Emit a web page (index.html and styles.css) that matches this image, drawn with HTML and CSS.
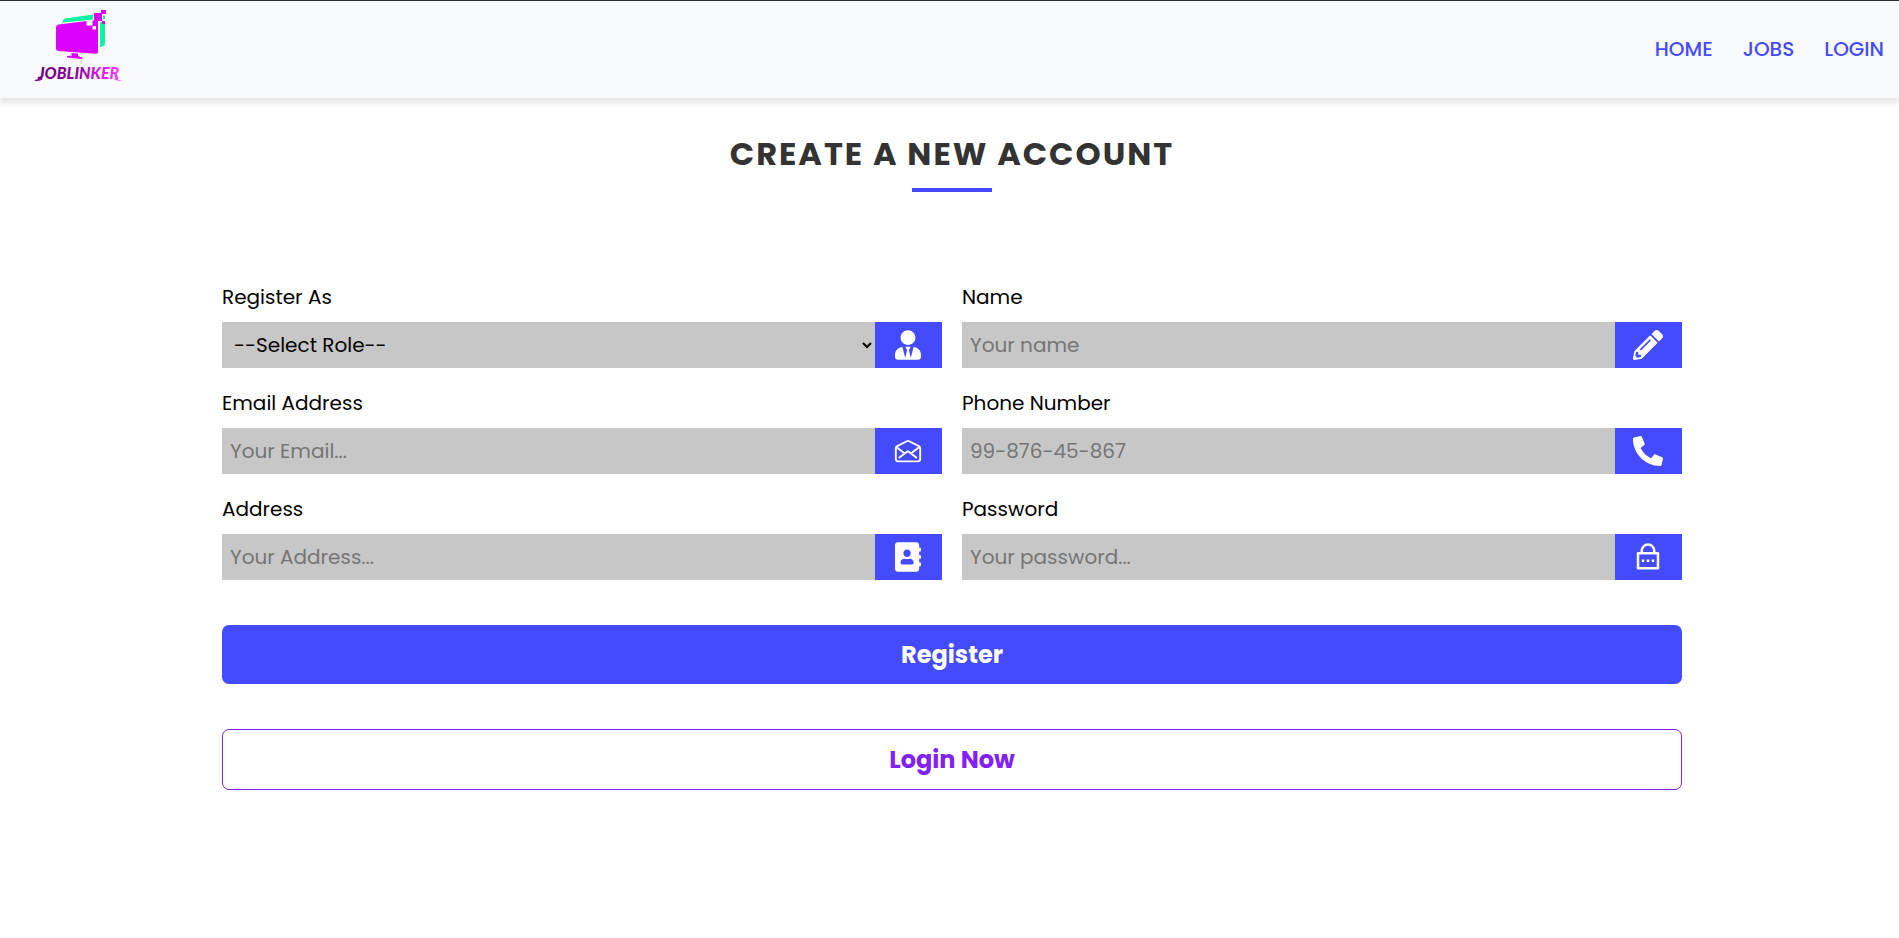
FILE: index.html
```html
<!DOCTYPE html>
<html lang="en">
<head>
<meta charset="utf-8">
<meta name="viewport" content="width=device-width, initial-scale=1">
<title>JobLinker - Register</title>
<link rel="stylesheet" href="styles.css">
</head>
<body>
<header class="navbar">
  <a class="logo" href="#" aria-label="JobLinker">
    <svg width="90" height="76" viewBox="0 0 90 76">
      <defs>
        <linearGradient id="wordmark" x1="0" x2="1" y1="0" y2="0">
          <stop offset="0" stop-color="#6a0080"/>
          <stop offset="0.5" stop-color="#8f00a0"/>
          <stop offset="0.75" stop-color="#d41be0"/>
          <stop offset="1" stop-color="#f03cff"/>
        </linearGradient>
      </defs>
      <path fill="#0df5a0" d="M28 17.500 29 13.500Q29.500 11.700 31.500 11.500L59 7.500V12.500L29.500 15.500ZM66 15H71V36Q71 39 68 39.500L66 40Z"/>
      <path fill="#0df5a0" d="M69 8.500H71V12H69Z"/>
      <path fill="#dc00ff" d="M24.500 17.500 52.500 14V18.500H58.500V13.500H64V45Q64 47 61.500 46.700L24.500 44Q22 43.800 22 41V20.500Q22 18 24.500 17.500Z"/>
      <path fill="#dc00ff" d="M60 6H67V3H72V7H68V14H60ZM68 14H71V17H68Z"/>
      <path fill="#fff" d="M58.500 19H62V22.500H58.500Z"/>
      <path fill="#dc00ff" d="M37 46 44 46.500V49L48 50.500V52L33 50.500V49L38 48.500Z"/>
      <path fill="#8f0a9c" d="M0 73.500Q4 73 6 70L9 72Q5 75 0 73.500Z"/>
      <path fill="#f03cff" d="M82 71Q84 73.500 88 73.500Q83 74.500 80 72Z"/>
      <text class="wordmark" x="4" y="72" fill="url(#wordmark)">JOBLINKER</text>
    </svg>
  </a>
  <nav class="links">
    <a href="#">HOME</a>
    <a href="#">JOBS</a>
    <a href="#">LOGIN</a>
  </nav>
</header>

<main class="page">
  <h1 class="title">CREATE A NEW ACCOUNT</h1>
  <form class="form">
    <div class="fields">
      <div class="field">
        <label for="role">Register As</label>
        <div class="control">
          <select id="role"><option>--Select Role--</option><option>Employer</option><option>Job Seeker</option></select>
          <span class="icon"><svg width="26" height="30" viewBox="0 0 448 512" fill="currentColor"><path d="M224 256c70.700 0 128-57.300 128-128S294.700 0 224 0 96 57.300 96 128s57.300 128 128 128zm95.800 32.600L272 480l-32-136 32-56h-96l32 56-32 136-47.800-191.400C56.900 292 0 350.300 0 422.400V464c0 26.500 21.500 48 48 48h352c26.500 0 48-21.500 48-48v-41.600c0-72.100-56.900-130.400-128.200-133.800z"/></svg></span>
        </div>
      </div>
      <div class="field">
        <label for="name">Name</label>
        <div class="control">
          <input id="name" type="text" placeholder="Your name">
          <span class="icon"><svg width="30" height="30" viewBox="0 0 512 512" fill="currentColor"><path d="M497.900 142.100l-46.100 46.100c-4.700 4.700-12.300 4.700-17 0l-111-111c-4.700-4.700-4.700-12.300 0-17l46.100-46.100c18.700-18.700 49.100-18.700 67.900 0l60.100 60.100c18.800 18.700 18.800 49.100 0 67.900zM284.200 99.800L21.600 362.400.400 483.900c-2.900 16.400 11.400 30.600 27.800 27.800l121.500-21.300 262.600-262.600c4.700-4.700 4.700-12.300 0-17l-111-111c-4.800-4.700-12.400-4.700-17.100 0zM124.100 339.900c-5.500-5.500-5.500-14.300 0-19.800l154-154c5.500-5.500 14.300-5.500 19.800 0s5.500 14.300 0 19.800l-154 154c-5.500 5.500-14.300 5.500-19.800 0zM88 424h48v36.300l-64.500 11.300-31.100-31.100L51.700 376H88v48z"/></svg></span>
        </div>
      </div>
      <div class="field">
        <label for="email">Email Address</label>
        <div class="control">
          <input id="email" type="email" placeholder="Your Email...">
          <span class="icon"><svg width="30" height="30" viewBox="0 0 512 512" fill="none" stroke="currentColor" stroke-width="32" stroke-linecap="round" stroke-linejoin="round"><path d="M441.600 171.610L266.870 85.370a24.570 24.570 0 00-21.740 0L70.400 171.610A40 40 0 0048 207.390V392c0 22.090 18.140 40 40.520 40h335c22.380 0 40.520-17.910 40.520-40V207.390a40 40 0 00-22.440-35.780z"/><path d="M397.330 368L268.070 267.460a24 24 0 00-29.470 0L109.330 368M309.330 295l136-103M61.330 192l139 105"/></svg></span>
        </div>
      </div>
      <div class="field">
        <label for="phone">Phone Number</label>
        <div class="control">
          <input id="phone" type="tel" placeholder="99-876-45-867">
          <span class="icon"><svg width="30" height="30" viewBox="0 0 512 512" fill="currentColor"><path d="M497.390 361.800l-112-48a24 24 0 0 0-28 6.900l-49.600 60.600A370.660 370.660 0 0 1 130.600 204.110l60.600-49.600a23.940 23.940 0 0 0 6.900-28l-48-112A24.160 24.160 0 0 0 122.600.610l-104 24A24 24 0 0 0 0 48c0 256.500 207.900 464 464 464a24 24 0 0 0 23.400-18.600l24-104a24.290 24.290 0 0 0-14.010-27.600z"/></svg></span>
        </div>
      </div>
      <div class="field">
        <label for="address">Address</label>
        <div class="control">
          <input id="address" type="text" placeholder="Your Address...">
          <span class="icon"><svg width="26" height="30" viewBox="0 0 448 512" fill="currentColor"><path d="M436 160c6.600 0 12-5.400 12-12v-40c0-6.600-5.400-12-12-12h-20V48c0-26.500-21.500-48-48-48H48C21.500 0 0 21.500 0 48v416c0 26.500 21.500 48 48 48h320c26.500 0 48-21.500 48-48v-48h20c6.600 0 12-5.400 12-12v-40c0-6.600-5.400-12-12-12h-20v-64h20c6.600 0 12-5.400 12-12v-40c0-6.600-5.400-12-12-12h-20v-64h20zm-228-32c35.300 0 64 28.700 64 64s-28.700 64-64 64-64-28.700-64-64 28.700-64 64-64zm112 236.800c0 10.600-10 19.200-22.400 19.200H118.400C106 384 96 375.400 96 364.800v-19.200c0-31.800 30.100-57.600 67.200-57.600h5c12.300 5.100 25.700 8 39.800 8s27.600-2.900 39.800-8h5c37.100 0 67.200 25.800 67.200 57.600v19.200z"/></svg></span>
        </div>
      </div>
      <div class="field">
        <label for="password">Password</label>
        <div class="control">
          <input id="password" type="password" placeholder="Your password...">
          <span class="icon"><svg width="30" height="30" viewBox="0 0 24 24" fill="currentColor"><path d="M18 8h2a1 1 0 0 1 1 1v12a1 1 0 0 1-1 1H4a1 1 0 0 1-1-1V9a1 1 0 0 1 1-1h2V7a6 6 0 1 1 12 0v1zM5 10v10h14V10H5zm6 4h2v2h-2v-2zm-4 0h2v2H7v-2zm8 0h2v2h-2v-2zm1-6V7a4 4 0 1 0-8 0v1h8z"/></svg></span>
        </div>
      </div>
    </div>
    <button class="button primary" type="submit">Register</button>
    <a class="button outline" href="#">Login Now</a>
  </form>
</main>
</body>
</html>
```
FILE: styles.css
```css
* {
  box-sizing: border-box;
}

body {
  margin: 0;
  background: #fff;
  color: #000;
  font-family: Poppins, Inter, "Open Sans", sans-serif;
  font-size: 20px;
  line-height: 30px;
}

a {
  text-decoration: none;
}

.navbar {
  display: flex;
  justify-content: space-between;
  align-items: center;
  padding: 6px 15px 15px 34px;
  border-top: 1px solid #2b2a33;
  background: #f9fafc;
  box-shadow: 0 5px 5px rgba(0, 0, 0, 0.1);
}

.logo svg {
  display: block;
}

.wordmark {
  font-family: Lato, sans-serif;
  font-size: 16px;
  font-style: italic;
  font-weight: 900;
}

.links {
  display: flex;
  gap: 30px;
  padding-top: 8px;
}

.links a {
  color: #444bff;
  font-size: 20px;
  font-weight: 500;
}

.page {
  max-width: 1465px;
  margin: 0 auto;
  padding: 32px 0 40px 5px;
}

.title {
  display: flex;
  flex-direction: column;
  align-items: center;
  gap: 10px;
  margin: 0 0 90px;
  color: #333;
  font-size: 32px;
  font-weight: 700;
  line-height: 48px;
  letter-spacing: 2px;
}

.title::after {
  content: "";
  width: 80px;
  height: 4px;
  background: #444bff;
}

.form {
  display: flex;
  flex-direction: column;
  gap: 45px;
}

.fields {
  display: grid;
  grid-template-columns: 1fr 1fr;
  gap: 20px;
}

.field {
  display: flex;
  flex-direction: column;
  gap: 10px;
}

.control {
  display: flex;
  height: 46px;
}

.control input,
.control select {
  flex: 1;
  min-width: 0;
  padding: 8px;
  border: 0;
  border-radius: 0;
  background: #c7c7c7;
  color: #000;
  font: inherit;
}

.control select {
  padding-right: 0;
}

.control input::placeholder {
  color: #757575;
}

.icon {
  display: flex;
  justify-content: center;
  align-items: center;
  width: 67px;
  padding-right: 1px;
  background: #444bff;
  color: #fff;
}

.button {
  padding: 12px;
  border: 0;
  border-radius: 7px;
  font-family: inherit;
  font-size: 24px;
  font-weight: 700;
  line-height: 35px;
  text-align: center;
  cursor: pointer;
}

.primary {
  background: #444bff;
  color: #fff;
}

.outline {
  border: 1px solid #8121f6;
  color: #8121f6;
}
```
